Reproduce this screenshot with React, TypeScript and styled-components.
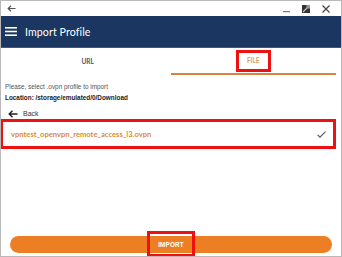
import React from "react";
import styled, { createGlobalStyle } from "styled-components";

const Global = createGlobalStyle`
  html, body { margin: 0; padding: 0; background: #ffffff; }
  body { font-family: Lato, "Open Sans", Arial, sans-serif; }
  * { box-sizing: border-box; }
`;

const Window = styled.div`
  width: 342px;
  height: 257px;
  border: 1px solid #b9b9b9;
  display: flex;
  flex-direction: column;
  background: #fff;
  overflow: hidden;
`;

const TitleBar = styled.div`
  height: 15px;
  display: flex;
  align-items: center;
  padding: 0 5px 0 6px;
  color: #444;
`;

const TitleSpacer = styled.div`
  flex: 1;
`;

const WinButton = styled.div`
  width: 20px;
  height: 15px;
  display: flex;
  align-items: center;
  justify-content: center;
`;

const Header = styled.div`
  height: 32px;
  background: #1b3661;
  border-bottom: 1px solid #3a5a86;
  display: flex;
  align-items: center;
  padding-left: 4px;
  gap: 8px;
`;

const HeaderTitle = styled.div`
  color: #fff;
  font-size: 10.6px;
  font-family: Lato, sans-serif;
  letter-spacing: 0.1px;
`;

const Tabs = styled.div`
  display: flex;
  padding: 0 5px 0 4px;
  height: 27px;
`;

const Tab = styled.div<{ $active?: boolean }>`
  flex: 1;
  display: flex;
  align-items: center;
  justify-content: center;
  font-size: 6.5px;
  font-weight: 700;
  color: ${(p) => (p.$active ? "#e3a060" : "#4a5368")};
  border-bottom: 2px solid ${(p) => (p.$active ? "#d9843a" : "transparent")};
  padding-top: 1px;
`;

const Marked = styled.span`
  border: 3px solid #ee1111;
  padding: 4px 8px;
  line-height: 8px;
`;

const Info = styled.div`
  padding: 8px 4px 0;
  display: flex;
  flex-direction: column;
  gap: 3px;
`;

const InfoLine = styled.div<{ $bold?: boolean }>`
  font-family: "Liberation Sans", Arial, sans-serif;
  font-size: 6.4px;
  line-height: 8px;
  color: ${(p) => (p.$bold ? "#222" : "#555")};
  font-weight: ${(p) => (p.$bold ? 700 : 400)};
`;

const BackRow = styled.div`
  display: flex;
  align-items: center;
  gap: 5px;
  padding: 6px 0 0 7px;
  height: 17px;
  font-family: "Liberation Sans", Arial, sans-serif;
  font-size: 7px;
  color: #333;
`;

const FileRow = styled.div`
  margin-left: -1px;
  width: 336px;
  height: 30px;
  border: 3px solid #ee1111;
  display: flex;
  align-items: center;
  padding: 0 7px 0 8px;
`;

const FileName = styled.div`
  flex: 1;
  color: #dc8a3a;
  font-size: 7.6px;
  font-weight: 700;
  font-family: Lato, sans-serif;
`;

const Fill = styled.div`
  flex: 1;
`;

const ButtonWrap = styled.div`
  padding: 0 9px 3px 9px;
`;

const ImportButton = styled.div`
  position: relative;
  height: 17px;
  border-radius: 9px;
  background: #ec7f24;
  display: flex;
  align-items: center;
  justify-content: center;
  color: #fff;
  font-size: 6.3px;
  font-weight: 700;
  font-family: "Liberation Sans", Arial, sans-serif;
  letter-spacing: 0.2px;
`;

const ButtonMark = styled.div`
  position: absolute;
  left: 137px;
  top: -5px;
  width: 48px;
  height: 26px;
  border: 3px solid #ee1111;
`;

export default function App() {
  return (
    <>
      <Global />
      <Window>
        <TitleBar>
          <svg width="9" height="7" viewBox="0 0 9 7">
            <path d="M8.5 3.5H1.5M4 0.8L1.2 3.5L4 6.2" stroke="#555" strokeWidth="1.2" fill="none" />
          </svg>
          <TitleSpacer />
          <WinButton>
            <svg width="7" height="8" viewBox="0 0 7 8">
              <rect x="0" y="6" width="7" height="1.2" fill="#777" />
            </svg>
          </WinButton>
          <WinButton>
            <svg width="8" height="8" viewBox="0 0 8 8">
              <rect x="0" y="0" width="8" height="8" fill="#333" />
              <path d="M1 7L7 1" stroke="#bbb" strokeWidth="1.2" />
              <rect x="4.5" y="0" width="3.5" height="3.5" fill="#999" />
            </svg>
          </WinButton>
          <WinButton>
            <svg width="8" height="8" viewBox="0 0 8 8">
              <path d="M0.5 0.5L7.5 7.5M7.5 0.5L0.5 7.5" stroke="#444" strokeWidth="1.2" />
            </svg>
          </WinButton>
        </TitleBar>
        <Header>
          <svg width="12" height="9" viewBox="0 0 12 9">
            <rect x="0" y="0" width="12" height="1.6" fill="#fff" />
            <rect x="0" y="3.7" width="12" height="1.6" fill="#fff" />
            <rect x="0" y="7.4" width="12" height="1.6" fill="#fff" />
          </svg>
          <HeaderTitle>Import Profile</HeaderTitle>
        </Header>
        <Tabs>
          <Tab>URL</Tab>
          <Tab $active>
            <Marked>FILE</Marked>
          </Tab>
        </Tabs>
        <Info>
          <InfoLine>Please, select .ovpn profile to import</InfoLine>
          <InfoLine $bold>Location: /storage/emulated/0/Download</InfoLine>
        </Info>
        <BackRow>
          <svg width="10" height="8" viewBox="0 0 10 8">
            <path d="M9.5 4H1.5M4.5 0.8L1.2 4L4.5 7.2" stroke="#222" strokeWidth="1.4" fill="none" />
          </svg>
          Back
        </BackRow>
        <FileRow>
          <FileName>vpntest_openvpn_remote_access_l3.ovpn</FileName>
          <svg width="9" height="7" viewBox="0 0 9 7">
            <path d="M0.6 3.8L3 6.2L8.5 0.6" stroke="#555" strokeWidth="1.1" fill="none" />
          </svg>
        </FileRow>
        <Fill />
        <ButtonWrap>
          <ImportButton>
            IMPORT
            <ButtonMark />
          </ImportButton>
        </ButtonWrap>
      </Window>
    </>
  );
}
